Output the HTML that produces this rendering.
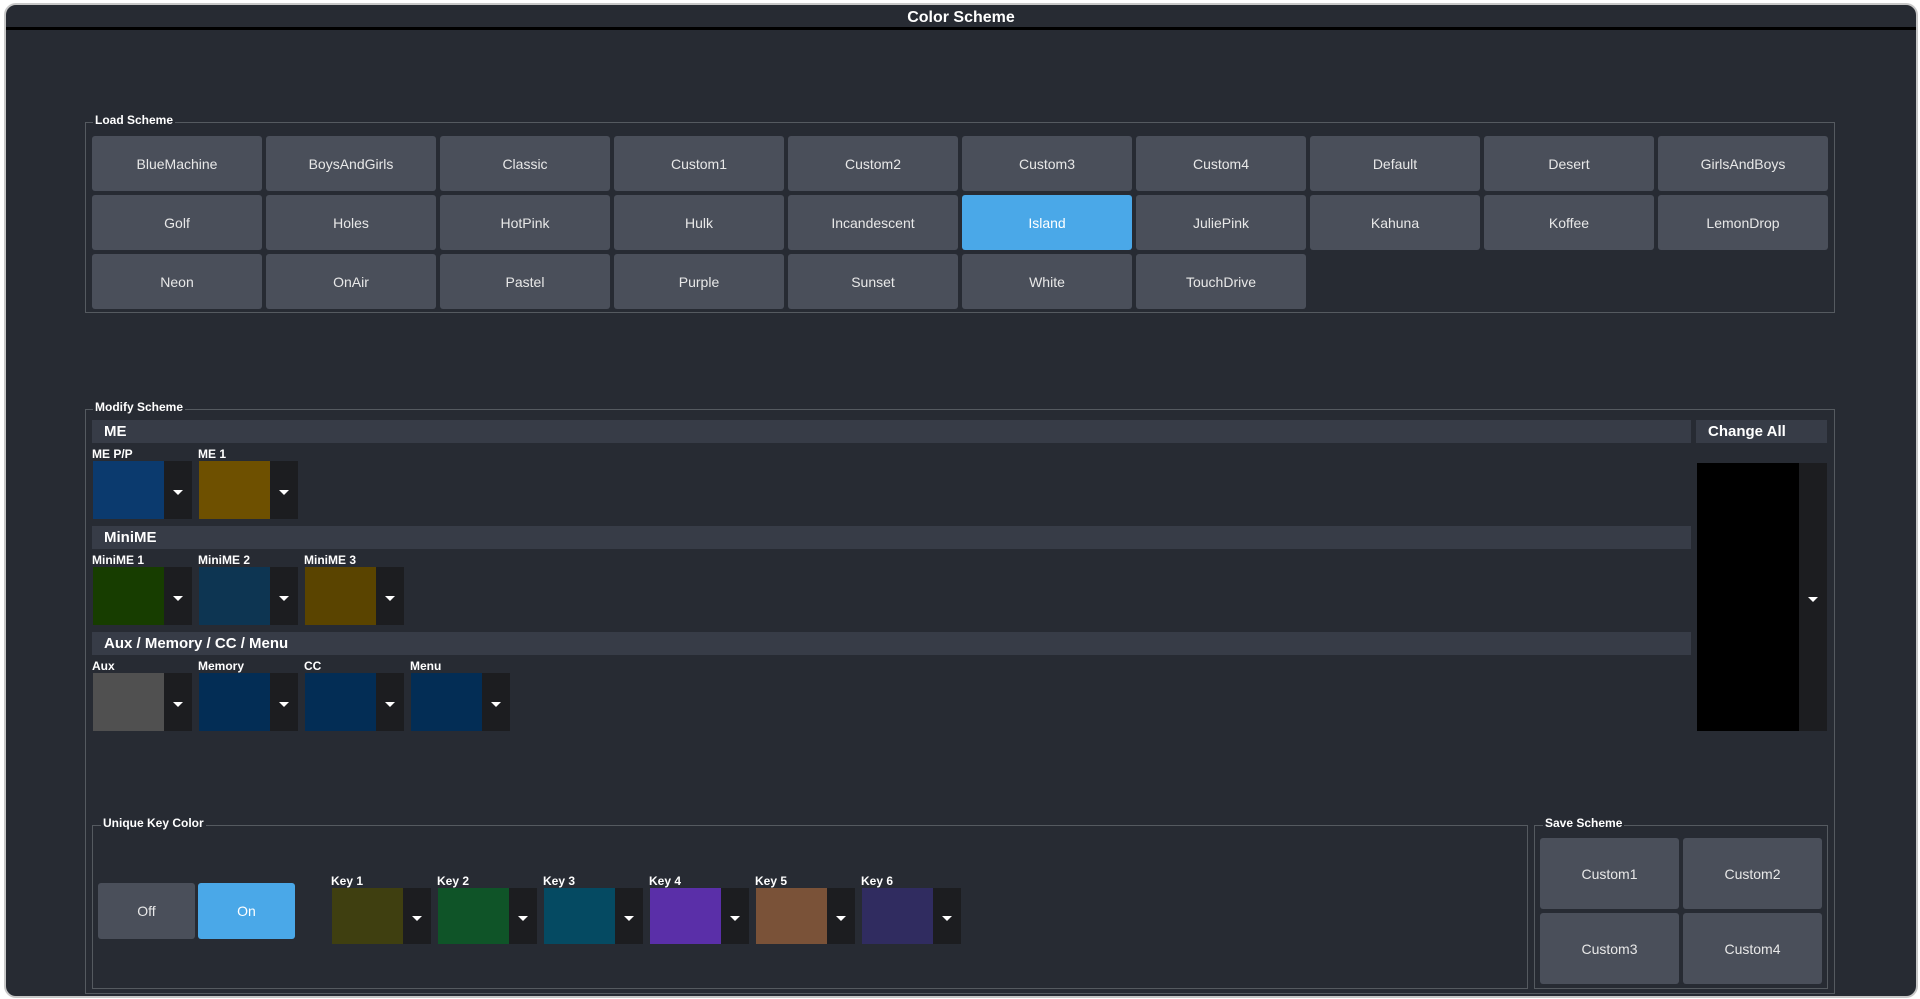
<!DOCTYPE html><html><head><style>
body{margin:0;width:1920px;height:999px;background:#fff;overflow:hidden;font-family:"Liberation Sans",sans-serif}
#win{position:absolute;left:4px;top:3px;width:1910px;height:991px;background:#272b33;border:2px solid #c8c8c8;border-radius:12px;overflow:hidden}
.a{position:absolute;box-sizing:border-box}
.title{left:0;top:0;width:100%;height:25px;color:#fff;font-weight:bold;font-size:16px;text-align:center;line-height:25px;border-bottom:3px solid #000}
.box{border:1px solid #555a60}
.lbl{position:absolute;color:#fff;font-weight:bold;font-size:12px;background:#272b33;padding:0 2px}
.b{background:#4a4f5a;border-radius:3px;color:#e8e8e8;font-size:14px;display:flex;align-items:center;justify-content:center}
.hdr{background:#373c47;color:#fff;font-weight:bold;font-size:15px;padding-left:12px;line-height:24px}
.sl{color:#fff;font-weight:bold;font-size:12px}
.dd{background:#1c1d20}
.dd:after{content:"";position:absolute;left:50%;top:50%;margin-left:-5px;border:5px solid transparent;border-top:5px solid #fff;border-bottom:0}
</style></head><body><div id="win">
<div class="a title">Color Scheme</div>
<div id="c"></div>
</div>
<script>
var c=document.getElementById('c'),h='';
function A(cls,x,y,w,hh,t,st){h+='<div class="a '+cls+'" style="left:'+(x-6)+'px;top:'+(y-5)+'px;width:'+w+'px;height:'+hh+'px;'+(st||'')+'">'+(t||'')+'</div>';}
A('box',85,122,1750,191);h+='<div class="lbl" style="left:'+(93-6)+'px;top:'+(113-5)+'px">Load Scheme</div>';
var n=['BlueMachine','BoysAndGirls','Classic','Custom1','Custom2','Custom3','Custom4','Default','Desert','GirlsAndBoys','Golf','Holes','HotPink','Hulk','Incandescent','Island','JuliePink','Kahuna','Koffee','LemonDrop','Neon','OnAir','Pastel','Purple','Sunset','White','TouchDrive'];
n.forEach(function(s,i){var r=Math.floor(i/10),k=i%10;A('b',92+k*174,136+r*59,170,55,s,s=='Island'?'background:#4aa8e8;color:#fff':'');});
A('box',85,409,1750,585);h+='<div class="lbl" style="left:'+(93-6)+'px;top:'+(400-5)+'px">Modify Scheme</div>';
A('hdr',92,420,1599,23,'ME');A('hdr',1696,420,131,23,'Change All');
A('hdr',92,526,1599,23,'MiniME');A('hdr',92,632,1599,23,'Aux / Memory / CC / Menu');
function sw(x,y,l,col,sw_w,hh){A('sl',x,y-14,100,14,l);A('',x+1,y,sw_w,hh,'','background:'+col);A('dd',x+sw_w+1,y,28,hh);}
sw(92,461,'ME P/P','#0b3a6e',71,58);sw(198,461,'ME 1','#6e5000',71,58);
sw(92,567,'MiniME 1','#173d00',71,58);sw(198,567,'MiniME 2','#0d3552',71,58);sw(304,567,'MiniME 3','#5a4400',71,58);
sw(92,673,'Aux','#505050',71,58);sw(198,673,'Memory','#032d55',71,58);sw(304,673,'CC','#032d55',71,58);sw(410,673,'Menu','#032d55',71,58);
A('',1697,463,102,268,'','background:#000');A('dd',1799,463,28,268);
A('box',92,825,1436,164);h+='<div class="lbl" style="left:'+(101-6)+'px;top:'+(816-5)+'px">Unique Key Color</div>';
A('b',98,883,97,56,'Off');A('b',198,883,97,56,'On','background:#4aa8e8;color:#fff');
var kc=['#3f3f10','#0f5428','#054a62','#5a2fa8','#7a5238','#302c60'];
kc.forEach(function(col,i){sw(331+i*106,888,'Key '+(i+1),col,71,56);});
A('box',1534,825,294,164);h+='<div class="lbl" style="left:'+(1543-6)+'px;top:'+(816-5)+'px">Save Scheme</div>';
A('b',1540,838,139,71,'Custom1');A('b',1683,838,139,71,'Custom2');A('b',1540,913,139,71,'Custom3');A('b',1683,913,139,71,'Custom4');
c.innerHTML=h;
</script></body></html>
